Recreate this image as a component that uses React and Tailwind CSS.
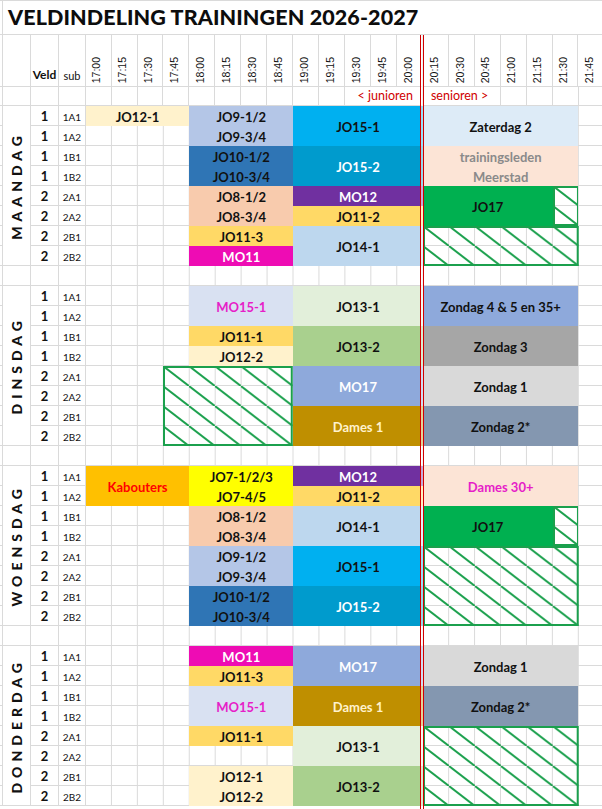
import { useId } from "react";

const CELL_W = 25.95;
const TIME_BG =
  "bg-[linear-gradient(to_right,transparent_calc(100%_-_1px),#dadada_calc(100%_-_1px)),linear-gradient(to_bottom,transparent_calc(100%_-_1px),#dadada_calc(100%_-_1px))] bg-[length:25.95px_20px]";

const times = [
  "17:00", "17:15", "17:30", "17:45", "18:00", "18:15", "18:30", "18:45",
  "19:00", "19:15", "19:30", "19:45", "20:00", "20:15", "20:30", "20:45",
  "21:00", "21:15", "21:30", "21:45",
];

const rows = [
  ["1", "1A1"], ["1", "1A2"], ["1", "1B1"], ["1", "1B2"],
  ["2", "2A1"], ["2", "2A2"], ["2", "2B1"], ["2", "2B2"],
];

const days = [
  {
    name: "MAANDAG",
    blocks: [
      { pos: "col-[1/span_4] row-[1/span_1]", bg: "bg-[#fff2cc]", lines: ["JO12-1"] },
      { pos: "col-[5/span_4] row-[1/span_2]", bg: "bg-[#b4c6e7]", lines: ["JO9-1/2", "JO9-3/4"] },
      { pos: "col-[5/span_4] row-[3/span_2]", bg: "bg-[#2f75b5]", lines: ["JO10-1/2", "JO10-3/4"] },
      { pos: "col-[5/span_4] row-[5/span_2]", bg: "bg-[#f8cbad]", lines: ["JO8-1/2", "JO8-3/4"] },
      { pos: "col-[5/span_4] row-[7/span_1]", bg: "bg-[#ffd966]", lines: ["JO11-3"] },
      { pos: "col-[5/span_4] row-[8/span_1]", bg: "bg-[#ee0cb4]", fg: "text-white", lines: ["MO11"] },
      { pos: "col-[9/span_5] row-[1/span_2]", bg: "bg-[#00b0f0]", lines: ["JO15-1"] },
      { pos: "col-[9/span_5] row-[3/span_2]", bg: "bg-[#009bcd]", fg: "text-white", lines: ["JO15-2"] },
      { pos: "col-[9/span_5] row-[5/span_1]", bg: "bg-[#7030a0]", fg: "text-white", lines: ["MO12"] },
      { pos: "col-[9/span_5] row-[6/span_1]", bg: "bg-[#ffd966]", lines: ["JO11-2"] },
      { pos: "col-[9/span_5] row-[7/span_2]", bg: "bg-[#bdd7ee]", lines: ["JO14-1"] },
      { pos: "col-[14/span_6] row-[1/span_2]", bg: "bg-[#ddebf7]", lines: ["Zaterdag 2"] },
      { pos: "col-[14/span_6] row-[3/span_2]", bg: "bg-[#fce4d6]", fg: "text-[#8a8a8a]", lines: ["trainingsleden", "Meerstad"] },
      { hatch: true, pos: "col-[19/span_1] row-[5/span_2]", cs: 1, rs: 2 },
      { hatch: true, pos: "col-[14/span_6] row-[7/span_2]", cs: 6, rs: 2 },
      { pos: "col-[14/span_5] row-[5/span_2]", bg: "bg-[#00b050]", lines: ["JO17"] },
    ],
  },
  {
    name: "DINSDAG",
    blocks: [
      { pos: "col-[5/span_4] row-[1/span_2]", bg: "bg-[#d9e1f2]", fg: "text-[#e61ec8]", lines: ["MO15-1"] },
      { pos: "col-[5/span_4] row-[3/span_1]", bg: "bg-[#ffd966]", lines: ["JO11-1"] },
      { pos: "col-[5/span_4] row-[4/span_1]", bg: "bg-[#fff2cc]", lines: ["JO12-2"] },
      { hatch: true, pos: "col-[4/span_5] row-[5/span_4]", cs: 5, rs: 4 },
      { pos: "col-[9/span_5] row-[1/span_2]", bg: "bg-[#e2efda]", lines: ["JO13-1"] },
      { pos: "col-[9/span_5] row-[3/span_2]", bg: "bg-[#a9d08e]", lines: ["JO13-2"] },
      { pos: "col-[9/span_5] row-[5/span_2]", bg: "bg-[#8ea9db]", fg: "text-white", lines: ["MO17"] },
      { pos: "col-[9/span_5] row-[7/span_2]", bg: "bg-[#bf8f00]", fg: "text-[#fff2cc]", lines: ["Dames 1"] },
      { pos: "col-[14/span_6] row-[1/span_2]", bg: "bg-[#8ea9db]", lines: ["Zondag 4 & 5 en 35+"] },
      { pos: "col-[14/span_6] row-[3/span_2]", bg: "bg-[#a6a6a6]", lines: ["Zondag 3"] },
      { pos: "col-[14/span_6] row-[5/span_2]", bg: "bg-[#d9d9d9]", lines: ["Zondag 1"] },
      { pos: "col-[14/span_6] row-[7/span_2]", bg: "bg-[#8497b0]", lines: ["Zondag 2*"] },
    ],
  },
  {
    name: "WOENSDAG",
    blocks: [
      { pos: "col-[1/span_4] row-[1/span_2]", bg: "bg-[#ffc000]", fg: "text-[#ff0000]", lines: ["Kabouters"] },
      { pos: "col-[5/span_4] row-[1/span_2]", bg: "bg-[#ffff00]", lines: ["JO7-1/2/3", "JO7-4/5"] },
      { pos: "col-[5/span_4] row-[3/span_2]", bg: "bg-[#f8cbad]", lines: ["JO8-1/2", "JO8-3/4"] },
      { pos: "col-[5/span_4] row-[5/span_2]", bg: "bg-[#b4c6e7]", lines: ["JO9-1/2", "JO9-3/4"] },
      { pos: "col-[5/span_4] row-[7/span_2]", bg: "bg-[#2f75b5]", lines: ["JO10-1/2", "JO10-3/4"] },
      { pos: "col-[9/span_5] row-[1/span_1]", bg: "bg-[#7030a0]", fg: "text-white", lines: ["MO12"] },
      { pos: "col-[9/span_5] row-[2/span_1]", bg: "bg-[#ffd966]", lines: ["JO11-2"] },
      { pos: "col-[9/span_5] row-[3/span_2]", bg: "bg-[#bdd7ee]", lines: ["JO14-1"] },
      { pos: "col-[9/span_5] row-[5/span_2]", bg: "bg-[#00b0f0]", lines: ["JO15-1"] },
      { pos: "col-[9/span_5] row-[7/span_2]", bg: "bg-[#009bcd]", fg: "text-white", lines: ["JO15-2"] },
      { pos: "col-[14/span_6] row-[1/span_2]", bg: "bg-[#fce4d6]", fg: "text-[#e61ec8]", lines: ["Dames 30+"] },
      { hatch: true, pos: "col-[19/span_1] row-[3/span_2]", cs: 1, rs: 2 },
      { hatch: true, pos: "col-[14/span_6] row-[5/span_4]", cs: 6, rs: 4 },
      { pos: "col-[14/span_5] row-[3/span_2]", bg: "bg-[#00b050]", lines: ["JO17"] },
    ],
  },
  {
    name: "DONDERDAG",
    blocks: [
      { pos: "col-[5/span_4] row-[1/span_1]", bg: "bg-[#ee0cb4]", fg: "text-white", lines: ["MO11"] },
      { pos: "col-[5/span_4] row-[2/span_1]", bg: "bg-[#ffd966]", lines: ["JO11-3"] },
      { pos: "col-[5/span_4] row-[3/span_2]", bg: "bg-[#d9e1f2]", fg: "text-[#e61ec8]", lines: ["MO15-1"] },
      { pos: "col-[5/span_4] row-[5/span_1]", bg: "bg-[#ffd966]", lines: ["JO11-1"] },
      { pos: "col-[5/span_4] row-[7/span_2]", bg: "bg-[#fff2cc]", lines: ["JO12-1", "JO12-2"] },
      { pos: "col-[9/span_5] row-[1/span_2]", bg: "bg-[#8ea9db]", fg: "text-white", lines: ["MO17"] },
      { pos: "col-[9/span_5] row-[3/span_2]", bg: "bg-[#bf8f00]", fg: "text-[#fff2cc]", lines: ["Dames 1"] },
      { pos: "col-[9/span_5] row-[5/span_2]", bg: "bg-[#e2efda]", lines: ["JO13-1"] },
      { pos: "col-[9/span_5] row-[7/span_2]", bg: "bg-[#a9d08e]", lines: ["JO13-2"] },
      { pos: "col-[14/span_6] row-[1/span_2]", bg: "bg-[#d9d9d9]", lines: ["Zondag 1"] },
      { pos: "col-[14/span_6] row-[3/span_2]", bg: "bg-[#8497b0]", lines: ["Zondag 2*"] },
      { hatch: true, pos: "col-[14/span_6] row-[5/span_4]", cs: 6, rs: 4 },
    ],
  },
];

const Hatch = ({ pos, cs, rs }) => {
  const id = useId().replace(/:/g, "");
  const w = cs * CELL_W;
  const h = rs * 20;
  return (
    <svg className={`${pos} block`} width={w} height={h}>
      <defs>
        <pattern id={id} width={CELL_W} height="20" patternUnits="userSpaceOnUse">
          <line x1="0" y1="0" x2={CELL_W} y2="20" stroke="#1ba04d" strokeWidth="2" />
        </pattern>
      </defs>
      <rect width={w} height={h} fill={`url(#${id})`} />
      <rect x="1" y="1" width={w - 2} height={h - 2} fill="none" stroke="#1ba04d" strokeWidth="2" />
    </svg>
  );
};

const Block = ({ b }) => {
  if (b.hatch) return <Hatch {...b} />;
  return (
    <div
      className={`${b.pos} ${b.bg} ${b.fg || "text-[#111]"} flex flex-col items-center justify-center pt-[2px] font-bold text-[13px] whitespace-nowrap`}
    >
      {b.lines.map((l) => (
        <div key={l} className="h-[20px] leading-[20px]">
          {l}
        </div>
      ))}
    </div>
  );
};

const GapRow = () => (
  <div className="flex h-[20px]">
    <div className="w-[3px] shrink-0 border-r border-b border-[#dadada]" />
    <div className="w-[27.7px] shrink-0 border-r border-b border-[#dadada]" />
    <div className="w-[28.6px] shrink-0 border-r border-b border-[#dadada]" />
    <div className="w-[26.4px] shrink-0 border-r border-b border-[#dadada]" />
    <div className={`w-[519px] shrink-0 ${TIME_BG}`} />
  </div>
);

const Day = ({ day }) => (
  <div className="flex h-[160px]">
    <div className="flex flex-col w-[3px] shrink-0">
      {rows.map((r) => (
        <div key={r[1]} className="h-[20px] border-r border-b border-[#dadada]" />
      ))}
    </div>
    <div className="w-[27.7px] shrink-0 border-r border-b border-[#dadada] flex items-center justify-center">
      <span className="[writing-mode:vertical-rl] rotate-180 font-black text-[14px] tracking-[5px] text-[#111]">
        {day.name}
      </span>
    </div>
    <div className="flex flex-col shrink-0">
      {rows.map((r) => (
        <div key={r[1]} className="flex h-[20px]">
          <div className="w-[28.6px] border-r border-b border-[#dadada] flex items-center justify-center pt-[2px] font-bold text-[13px] text-[#111]">
            {r[0]}
          </div>
          <div className="w-[26.4px] border-r border-b border-[#dadada] flex items-center justify-center pt-[3px] text-[10px] text-[#111]">
            {r[1]}
          </div>
        </div>
      ))}
    </div>
    <div className={`grid grid-cols-[repeat(20,25.95px)] grid-rows-[repeat(8,20px)] w-[519px] shrink-0 ${TIME_BG}`}>
      {day.blocks.map((b) => (
        <Block key={b.pos} b={b} />
      ))}
    </div>
  </div>
);

export default function App() {
  return (
    <div className="relative w-[602px] h-[809px] overflow-hidden bg-white font-['Lato',sans-serif]">
      {/* title */}
      <div className="flex h-[35px] border-t border-b border-[#dadada]">
        <div className="w-[3px] shrink-0 border-r border-[#dadada]" />
        <div className="pl-[5px] flex items-center font-black text-[21.5px] tracking-[0.1px] text-[#0d0d0d] whitespace-nowrap">
          VELDINDELING TRAININGEN 2026-2027
        </div>
      </div>

      {/* time header */}
      <div className="flex h-[52px]">
        <div className="w-[3px] shrink-0 border-r border-b border-[#dadada]" />
        <div className="w-[27.7px] shrink-0 border-r border-b border-[#dadada]" />
        <div className="w-[28.6px] shrink-0 border-r border-b border-[#dadada] flex items-end justify-center pb-[2px] font-bold text-[12px] text-[#111]">
          Veld
        </div>
        <div className="w-[26.4px] shrink-0 border-r border-b border-[#dadada] flex items-end justify-center pb-[2px] text-[11px] text-[#111]">
          sub
        </div>
        {times.map((t) => (
          <div
            key={t}
            className="w-[25.95px] shrink-0 border-r border-b border-[#dadada] flex items-end justify-center pb-[3px] pr-[3px]"
          >
            <span className="[writing-mode:vertical-rl] rotate-180 font-['Liberation_Sans',Arial,sans-serif] text-[10.5px] leading-none text-[#111]">
              {t}
            </span>
          </div>
        ))}
      </div>

      {/* junioren / senioren */}
      <div className="flex h-[19px]">
        <div className="w-[3px] shrink-0 border-r border-b border-[#dadada]" />
        <div className="w-[27.7px] shrink-0 border-r border-b border-[#dadada]" />
        <div className="w-[28.6px] shrink-0 border-r border-b border-[#dadada]" />
        <div className="w-[26.4px] shrink-0 border-r border-b border-[#dadada]" />
        {times.slice(0, 10).map((t) => (
          <div key={t} className="w-[25.95px] shrink-0 border-r border-b border-[#dadada]" />
        ))}
        <div className="w-[77.85px] shrink-0 border-r border-b border-[#dadada] flex items-center justify-end pr-[9px] pt-[1px] text-[12.5px] text-[#d00000] whitespace-nowrap">
          &lt; junioren
        </div>
        <div className="w-[77.85px] shrink-0 border-r border-b border-[#dadada] flex items-center pl-[8px] pt-[1px] text-[12.5px] text-[#d00000] whitespace-nowrap">
          senioren &gt;
        </div>
        {times.slice(16).map((t) => (
          <div key={t} className="w-[25.95px] shrink-0 border-r border-b border-[#dadada]" />
        ))}
      </div>

      {days.map((d, i) => (
        <div key={d.name}>
          <Day day={d} />
          {i < days.length - 1 && <GapRow />}
        </div>
      ))}

      {/* red junioren/senioren divider */}
      <div className="absolute left-[420px] top-[35px] bottom-0 w-[4px] border-x border-[#d00000] bg-white/60" />
    </div>
  );
}
